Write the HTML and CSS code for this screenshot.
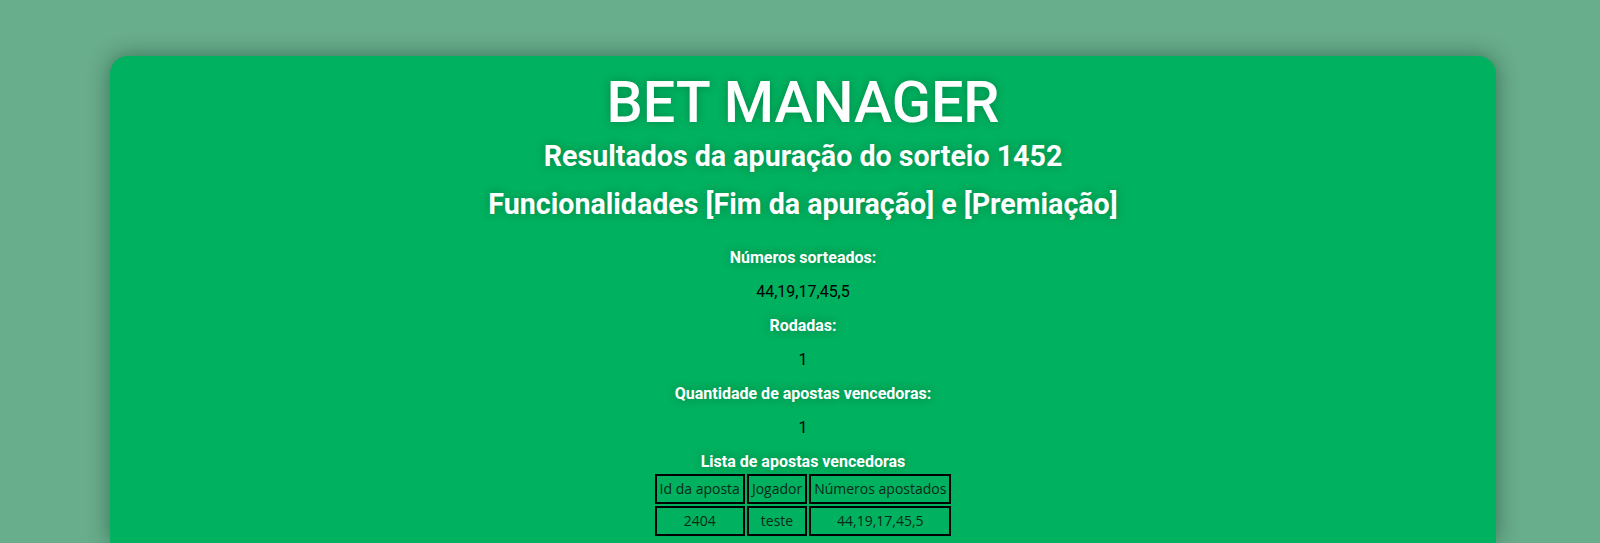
FILE: index.html
```html
<!DOCTYPE html>
<html lang="pt-BR">
<head>
<meta charset="utf-8">
<title>Bet Manager</title>
<link rel="stylesheet" href="styles.css">
</head>
<body>
<main class="card">
  <h1 class="title">BET MANAGER</h1>
  <h2 class="subtitle">Resultados da apuração do sorteio 1452</h2>
  <h2 class="features">Funcionalidades [Fim da apuração] e [Premiação]</h2>
  <p class="label first">Números sorteados:</p>
  <p class="value">44,19,17,45,5</p>
  <p class="label">Rodadas:</p>
  <p class="value">1</p>
  <p class="label">Quantidade de apostas vencedoras:</p>
  <p class="value">1</p>
  <p class="label">Lista de apostas vencedoras</p>
  <table class="bets">
    <thead>
      <tr><th>Id da aposta</th><th>Jogador</th><th>Números apostados</th></tr>
    </thead>
    <tbody>
      <tr><td>2404</td><td>teste</td><td>44,19,17,45,5</td></tr>
    </tbody>
  </table>
</main>
</body>
</html>
```
FILE: styles.css
```css
html, body {
  margin: 0;
  padding: 0;
}
body {
  background: #68ad8c;
  font-family: Roboto, "Noto Sans", sans-serif;
  height: 543px;
  overflow: hidden;
  padding: 56px 104px 0 110px;
  box-sizing: border-box;
  display: flex;
  flex-direction: column;
}
.card {
  flex: 1;
  background: #00b15f;
  border-radius: 18px 18px 0 0;
  box-shadow: 0 0 22px rgba(0, 40, 20, 0.45);
  display: flex;
  flex-direction: column;
  align-items: center;
  padding-top: 13px;
  overflow: hidden;
}
.title, .subtitle, .features, .label {
  color: #fff;
  text-shadow: 0 0 8px rgba(0, 60, 30, 0.35);
  margin: 0;
}
.title {
  font-size: 57.5px;
  font-weight: 500;
  line-height: 68px;
}
.subtitle {
  font-size: 28.6px;
  font-weight: 700;
  line-height: 34px;
  margin-top: 2px;
}
.features {
  font-size: 28.6px;
  font-weight: 700;
  line-height: 34px;
  margin-top: 14px;
}
.label {
  font-size: 16px;
  font-weight: 700;
  line-height: 18px;
  margin-top: 16px;
}
.label.first {
  margin-top: 28px;
}
.value {
  color: #000;
  font-size: 16px;
  line-height: 18px;
  margin: 16px 0 0;
}
.bets {
  border-collapse: separate;
  border-spacing: 2px;
  font-family: "Open Sans", "Noto Sans", sans-serif;
  font-size: 14px;
  color: #0b2a18;
  margin-top: 1px;
  flex-shrink: 0;
}
.bets th, .bets td {
  border: 2px solid #000;
  font-weight: 400;
  line-height: 18px;
  padding: 4px 3px;
  text-align: center;
}
```
